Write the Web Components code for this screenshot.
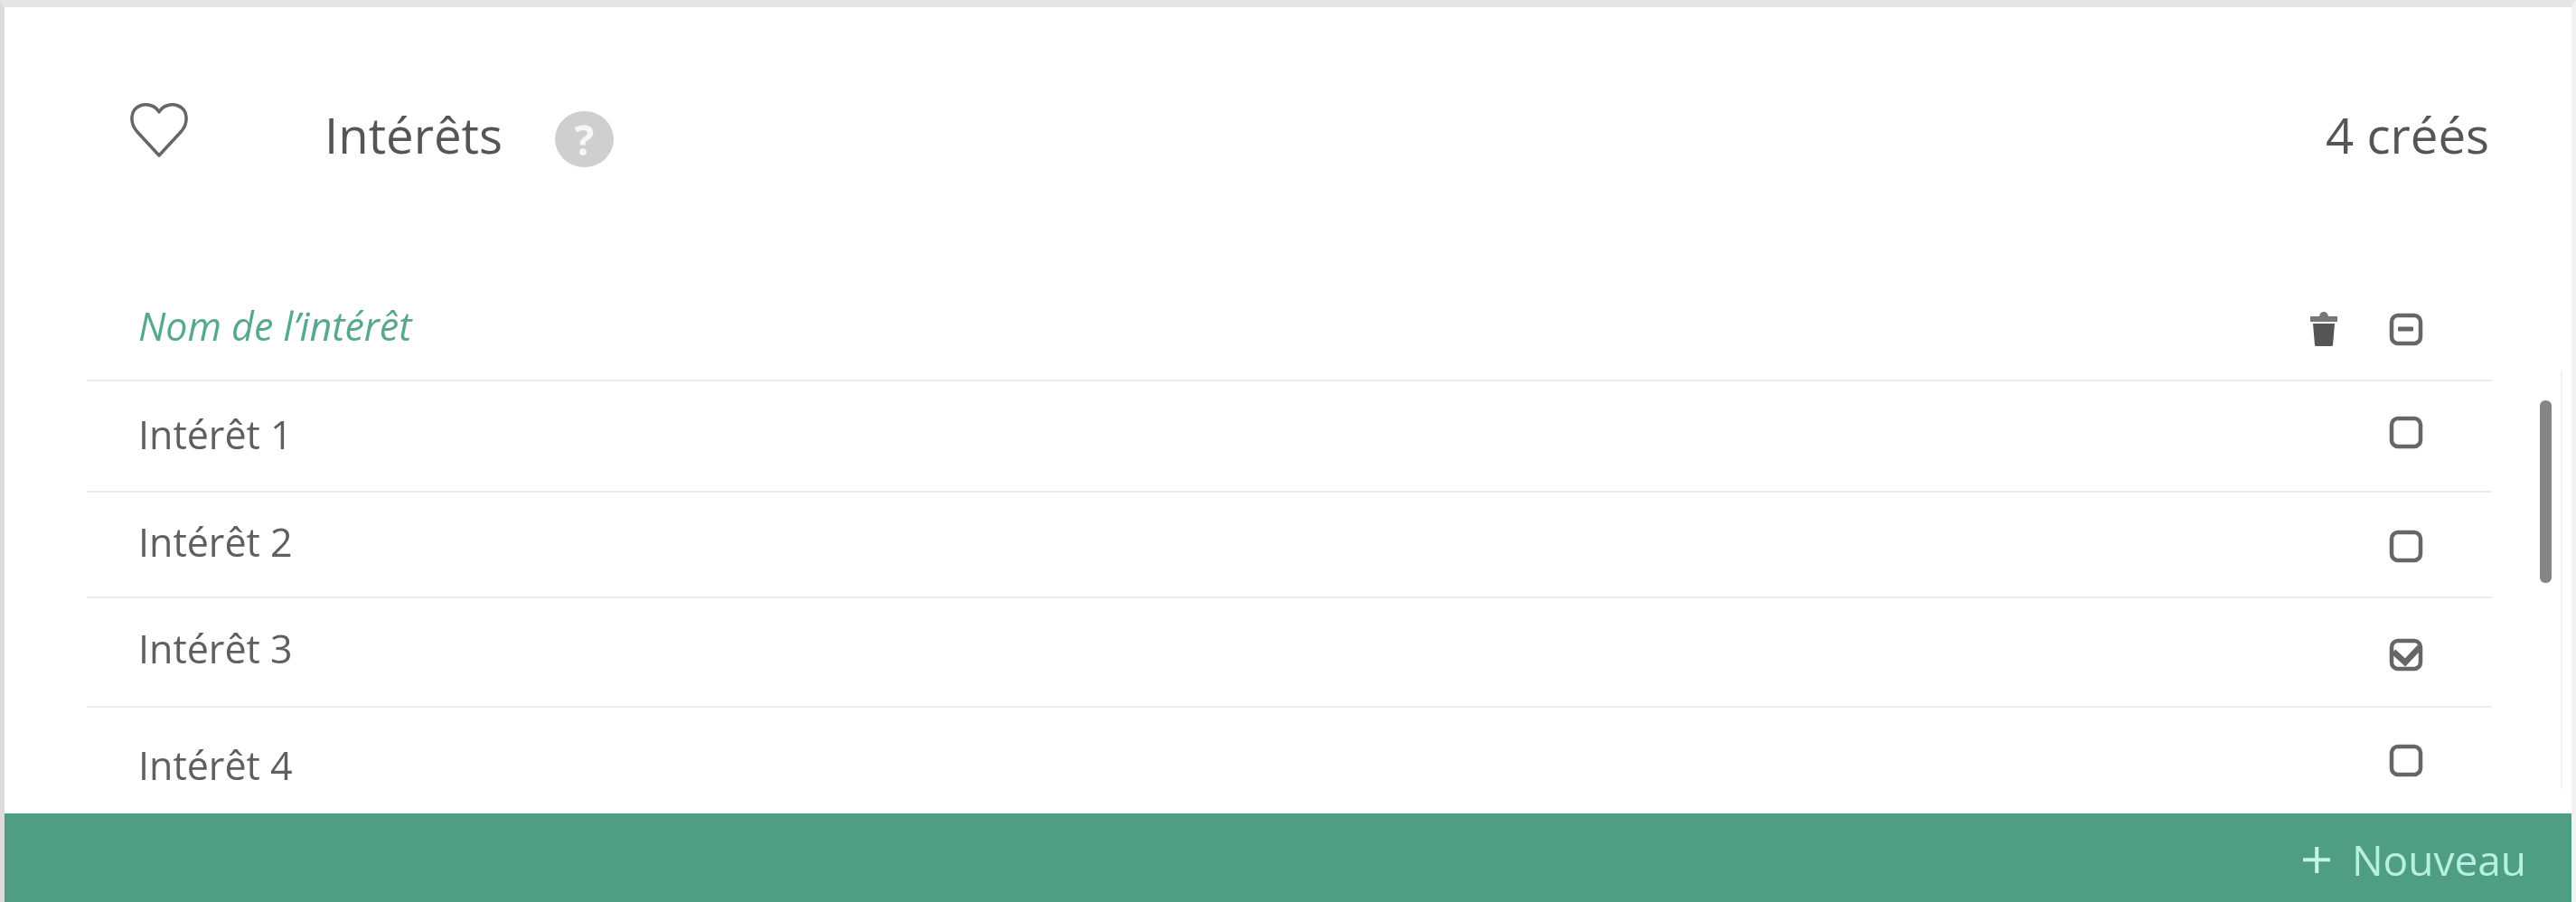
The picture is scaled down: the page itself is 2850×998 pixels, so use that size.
<!DOCTYPE html>
<html lang="fr"><head><meta charset="utf-8"><title>Intérêts</title>
<style>html,body{margin:0;padding:0;background:#fff;overflow:hidden}body{font-family:"Open Sans",sans-serif;color:#5a5a5a}</style>
</head><body>
<x-card>
  <x-head slot="head" title-text="Intérêts" count="4 créés"></x-head>
  <x-list>
    <x-row kind="head" h="122" tt="33" ct="46" label="Nom de l’intérêt" state="minus"></x-row>
    <x-row h="123" tt="31" ct="38" label="Intérêt 1"></x-row>
    <x-row h="117" tt="27" ct="41" label="Intérêt 2"></x-row>
    <x-row h="121" tt="28" ct="44" label="Intérêt 3" state="checked"></x-row>
    <x-row h="117" last tt="36" ct="40" label="Intérêt 4"></x-row>
  </x-list>
  <x-foot slot="foot">Nouveau</x-foot>
</x-card>
<script>
class XCard extends HTMLElement{constructor(){super();this.attachShadow({mode:'open'}).innerHTML=`<style>
:host{display:flex;flex-direction:column;box-sizing:border-box;width:2850px;height:998px;background:#fff;border-top:8px solid #e6e6e6;border-left:5px solid #dcdcdc;border-right:5px solid #f3f3f3;filter:blur(.7px)}
</style><slot name="head"></slot><slot></slot><slot name="foot"></slot>`}}
class XHead extends HTMLElement{connectedCallback(){this.attachShadow({mode:'open'}).innerHTML=`<style>
:host{display:flex;align-items:flex-start;height:292px;padding:0 91px 0 138px;box-sizing:border-box;font-size:54.5px;color:#555;line-height:72px}
svg{display:block}
.h{margin-top:105px;width:66px;height:62px}
.t{margin:105px 0 0 150px;}
.q{margin:115px 0 0 58px;width:65px;height:62px;border-radius:50%;background:#cfcfcf;color:#f6f6f6;font-size:46px;font-weight:700;line-height:62px;text-align:center}
.c{margin:105px 0 0 auto}
</style>
<svg class="h" viewBox="0 0 66 62" fill="none" stroke="#666" stroke-width="3.500" stroke-linejoin="round"><path d="M33 59 L9 33 C0 23 1 8 12 4 C20 1 29 4 33 11 C37 4 46 1 54 4 C65 8 66 23 57 33 Z"/></svg>
<span class="t">${this.getAttribute('title-text')}</span><span class="q">?</span><span class="c">${this.getAttribute('count')}</span>`}}
class XList extends HTMLElement{constructor(){super();this.attachShadow({mode:'open'}).innerHTML=`<style>
:host{display:block;position:relative;height:600px;padding:0 88px 0 91px}
.track{position:absolute;left:2828px;top:110px;width:2px;height:463px;background:#f4f4f4}
.thumb{position:absolute;left:2805px;top:143px;width:13px;height:202px;border-radius:6px;background:#858585}
</style><slot></slot><div class="track"></div><div class="thumb"></div>`}}
class XCheck extends HTMLElement{connectedCallback(){const s=this.getAttribute('state');
const inner=s==='minus'?'<rect x="10" y="15.500" width="17" height="5" rx="1" fill="#666"/>':s==='checked'?'<path d="M5 15 L18 27 L34 10" fill="none" stroke="#666" stroke-width="6.500"/>':'';
const box='<rect x="3" y="3" width="32" height="31" rx="7" fill="#fff" stroke="#666" stroke-width="4.500"/>';
this.attachShadow({mode:'open'}).innerHTML=`<style>:host{display:block;width:38px;height:37px}svg{display:block}</style><svg width="38" height="37" viewBox="0 0 38 37">${box}${inner}</svg>`}}
class XRow extends HTMLElement{connectedCallback(){const a=n=>this.getAttribute(n);const head=a('kind')==='head';
const trash=head?`<svg class="trash" width="32" height="38" viewBox="0 0 32 38"><path d="M11 5 Q12 0 16 0 Q20 0 21 5 H31 V11 H1 V5 Z" fill="#777"/><path d="M4 13 H28 L26 37 Q26 38 24 38 H8 Q6 38 6 37 Z" fill="#555"/></svg>`:'';
this.attachShadow({mode:'open'}).innerHTML=`<style>
:host{display:flex;align-items:flex-start;box-sizing:border-box;height:${a('h')}px;${this.hasAttribute('last')?'':'border-bottom:2px solid #ececec;'}padding:0 76px 0 57px;font-size:43px;line-height:56px;color:${head?'#56a98f':'#5f5f5f'};${head?'font-style:italic;':''}}
.l{margin-top:${a('tt')}px;flex:1}
.trash{display:block;margin:${+a('ct')-1}px 56px 0 0}
x-check{margin-top:${a('ct')}px}
</style><span class="l">${a('label')}</span>${trash}<x-check state="${a('state')||''}"></x-check>`}}
class XFoot extends HTMLElement{constructor(){super();this.attachShadow({mode:'open'}).innerHTML=`<style>
:host{display:flex;align-items:center;justify-content:flex-end;flex:1;background:#4f9e84;color:#b6f0de;font-size:46px;padding:3px 50px 0 0}
svg{display:block;margin-right:24px}
</style><svg width="30" height="30" viewBox="0 0 33 33"><path d="M14.500 1h4.500v13.500H33v4.500H19V33h-4.500V19H0v-4.500h14.500z" fill="#c4f5e6"/></svg><slot></slot>`}}
customElements.define('x-card',XCard);customElements.define('x-head',XHead);customElements.define('x-list',XList);
customElements.define('x-check',XCheck);customElements.define('x-row',XRow);customElements.define('x-foot',XFoot);
</script>
</body></html>
